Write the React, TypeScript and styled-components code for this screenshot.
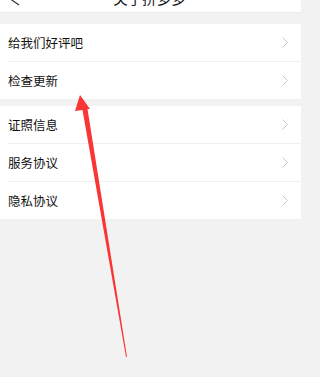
import * as React from 'react';
import styled, { createGlobalStyle } from 'styled-components';

const GlobalStyle = createGlobalStyle`
    html, body {
        margin: 0;
        padding: 0;
        background: #f2f2f2;
        font-family: "Noto Sans CJK SC", "Noto Sans", sans-serif;
    }
`;

const Page = styled.div`
    position: relative;
    width: 301px;
    height: 377px;
    overflow: hidden;
    background: #f2f2f2;
`;

const NavBar = styled.div`
    height: 12px;
    overflow: hidden;
    background: #fff;
    border-bottom: 1px solid #ebebeb;
`;

const NavInner = styled.div`
    position: relative;
    display: flex;
    align-items: center;
    justify-content: center;
    height: 44px;
    margin-top: -25px;
`;

const BackIcon = styled.svg`
    position: absolute;
    left: 6px;
    top: 13px;
`;

const Title = styled.div`
    font-size: 14.5px;
    color: #111;
    margin-left: -2px;
`;

const Card = styled.div<{ $gap: number }>`
    margin-top: ${(p) => p.$gap}px;
    background: #fff;
`;

const Row = styled.div`
    position: relative;
    display: flex;
    align-items: center;
    justify-content: space-between;
    height: 37px;
    padding: 0 13px 0 8px;

    & + &::before {
        content: '';
        position: absolute;
        top: 0;
        left: 8px;
        right: 0;
        height: 1px;
        background: #efefef;
    }

    & + & {
        padding-top: 1px;
    }
`;

const Label = styled.span`
    font-size: 12.5px;
    color: #111;
`;

const Arrow = styled.svg`
    position: absolute;
    left: 0;
    top: 0;
    pointer-events: none;
`;

const Chevron = () => (
    <svg width="6" height="11" viewBox="0 0 6 11">
        <polyline points="0.5,0.5 5.5,5.5 0.5,10.5" fill="none" stroke="#c8c8c8" strokeWidth="1" />
    </svg>
);

const groups = [
    { gap: 11, items: ['给我们好评吧', '检查更新'] },
    { gap: 7, items: ['证照信息', '服务协议', '隐私协议'] },
];

const App: React.FC = () => {
    return (
        <Page>
            <GlobalStyle />
            <NavBar>
                <NavInner>
                    <BackIcon width="14" height="18" viewBox="0 0 14 18">
                        <polyline points="13,1 1.5,9 13,17" fill="none" stroke="#333" strokeWidth="1.2" />
                    </BackIcon>
                    <Title>关于拼多多</Title>
                </NavInner>
            </NavBar>
            {groups.map((g) => (
                <Card key={g.items[0]} $gap={g.gap}>
                    {g.items.map((item) => (
                        <Row key={item}>
                            <Label>{item}</Label>
                            <Chevron />
                        </Row>
                    ))}
                </Card>
            ))}
            <Arrow width="308" height="377" viewBox="0 0 308 377">
                <polygon
                    points="80,95 90,109 87.5,109 127,357 126,357 82.5,110 75,111"
                    fill="#fa3535"
                />
            </Arrow>
        </Page>
    );
};

export default App;
